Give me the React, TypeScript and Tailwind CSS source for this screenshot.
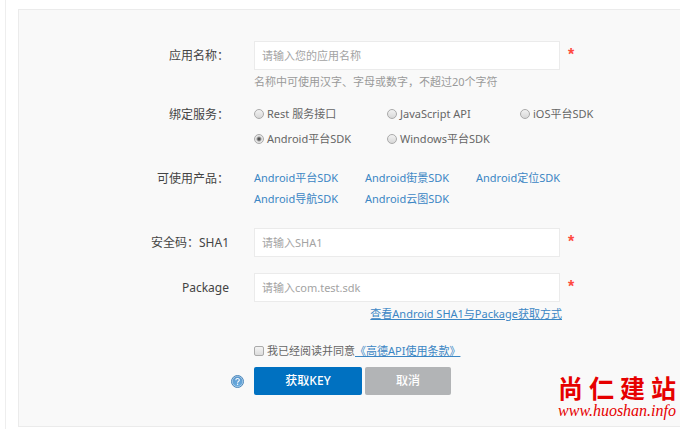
import React, { useState } from 'react';
import { clsx } from 'clsx';

const services = [
  { id: 'rest', name: 'Rest 服务接口' },
  { id: 'js', name: 'JavaScript API' },
  { id: 'ios', name: 'iOS平台SDK' },
  { id: 'android', name: 'Android平台SDK' },
  { id: 'windows', name: 'Windows平台SDK' },
];

const products = [
  'Android平台SDK',
  'Android街景SDK',
  'Android定位SDK',
  'Android导航SDK',
  'Android云图SDK',
];

const labelClass = 'w-[210px] shrink-0 text-right text-xs leading-[22px] text-[#444]';

interface FieldProps {
  id: string;
  label: string;
  placeholder: string;
  children?: React.ReactNode;
}

function Field({ id, label, placeholder, children }: FieldProps) {
  return (
    <div className="flex gap-[25px]">
      <label htmlFor={id} className={clsx(labelClass, 'pt-1')}>
        {label}
      </label>
      <div className="max-w-[308px] flex-1">
        <div className="flex items-start gap-2">
          <input
            id={id}
            type="text"
            placeholder={placeholder}
            className="h-[29px] w-[306px] shrink-0 border border-[#ebebeb] bg-white px-[7px] text-[11px] text-[#555] outline-none placeholder:text-[#a3a3a3] focus:border-[#8bbce0]"
          />
          <span className="pt-1 font-['Liberation_Sans',sans-serif] text-base leading-5 font-bold text-[#ff4a40]">*</span>
        </div>
        {children}
      </div>
    </div>
  );
}

function HelpIcon() {
  return (
    <svg width="13" height="13" viewBox="0 0 13 13" aria-hidden="true">
      <defs>
        <linearGradient id="help-fill" x1="0" y1="0" x2="0" y2="1">
          <stop offset="0" stopColor="#5b97cc" />
          <stop offset="1" stopColor="#69ace0" />
        </linearGradient>
      </defs>
      <circle cx="6.5" cy="6.5" r="6" fill="#b9d5ec" stroke="#4a86ba" strokeWidth="1" />
      <circle cx="6.5" cy="6.5" r="4.9" fill="url(#help-fill)" />
      <path
        d="M4.8 5.2C4.8 3 8.3 3 8.3 5.1C8.3 6.4 6.6 6.3 6.6 7.7"
        fill="none"
        stroke="#fff"
        strokeWidth="1.1"
      />
      <circle cx="6.6" cy="9.3" r="0.7" fill="#fff" />
    </svg>
  );
}

export default function App() {
  const [service, setService] = useState('android');
  const [agreed, setAgreed] = useState(false);

  return (
    <div className="relative min-h-screen overflow-hidden bg-white pl-[5px] font-['Noto_Sans','Noto_Sans_CJK_SC',sans-serif] text-[11px] text-[#666]">
      <div className="min-h-screen border-l border-[#eee] pt-[9px] pl-3">
        <form
          onSubmit={(e) => e.preventDefault()}
          className="border-y border-l border-[#ebebeb] bg-[#f9f9f9] pt-[31px] pb-[31px]"
        >
          <Field id="app-name" label="应用名称：" placeholder="请输入您的应用名称">
            <p className="pt-1 leading-4 whitespace-nowrap text-[#999]">
              名称中可使用汉字、字母或数字，不超过20个字符
            </p>
          </Field>

          {/* Service type */}
          <div className="flex gap-[25px] pt-[14px]" role="radiogroup" aria-labelledby="service-label">
            <div id="service-label" className={labelClass}>
              绑定服务：
            </div>
            <div className="grid grid-cols-[repeat(3,133px)] gap-y-[5px]">
              {services.map((s) => (
                <label key={s.id} className="flex items-center gap-[3px] leading-5 whitespace-nowrap">
                  <input
                    type="radio"
                    name="service"
                    checked={service === s.id}
                    onChange={() => setService(s.id)}
                    className="size-[10px] shrink-0 appearance-none rounded-full border border-[#aaa] bg-linear-to-b from-[#f2f2f2] to-[#d8d8d8] checked:bg-[radial-gradient(circle,#555_0_1px,#e6e6e6_3px)]"
                  />
                  {s.name}
                </label>
              ))}
            </div>
          </div>

          {/* Products */}
          <div className="flex gap-[25px] pt-[19px]">
            <div className={labelClass}>可使用产品：</div>
            <div className="grid grid-cols-[repeat(3,111px)] gap-y-px">
              {products.map((p) => (
                <a key={p} href="#" className="leading-5 whitespace-nowrap text-[#3b86c4]">
                  {p}
                </a>
              ))}
            </div>
          </div>

          <div className="flex flex-col gap-4 pt-[19px]">
            <Field id="sha1" label="安全码：SHA1" placeholder="请输入SHA1" />
            <Field id="package" label="Package" placeholder="请输入com.test.sdk">
              <a
                href="#"
                className="block pt-1 text-right leading-4 whitespace-nowrap text-[#3b86c4] underline"
              >
                查看Android SHA1与Package获取方式
              </a>
            </Field>
          </div>

          <div className="flex items-center pt-[19px] pl-[235px] leading-5">
            <label className="flex items-center gap-[3px]">
              <input
                type="checkbox"
                checked={agreed}
                onChange={(e) => setAgreed(e.target.checked)}
                className="size-[10px] shrink-0 appearance-none rounded-[2px] border border-[#aaa] bg-linear-to-b from-[#f4f4f4] to-[#dcdcdc] checked:bg-[#0071c1] checked:bg-none"
              />
              我已经阅读并同意
            </label>
            <a href="#" className="text-[#3b86c4] underline">
              《高德API使用条款》
            </a>
          </div>

          <div className="flex items-center pt-[6px] pl-[212px] text-white">
            <button type="button" aria-label="帮助" className="mr-[10px]">
              <HelpIcon />
            </button>
            <button type="submit" className="mr-[3px] h-7 w-[108px] rounded-[2px] bg-[#0071c1] text-xs font-medium">
              获取KEY
            </button>
            <button type="button" className="h-7 w-[86px] rounded-[2px] bg-[#b2b4b6] text-xs font-medium">
              取消
            </button>
          </div>
        </form>
      </div>

      {/* Site mark over the corner of the form */}
      <div className="pointer-events-none absolute right-[4px] bottom-[10px] w-[118px] text-[#e60000]">
        <div className="flex justify-between font-['Noto_Sans_CJK_SC',sans-serif] text-[25px] leading-8 font-bold">
          {['尚', '仁', '建', '站'].map((c) => (
            <span key={c}>{c}</span>
          ))}
        </div>
        <div className="flex justify-end font-['Liberation_Serif',serif] text-base leading-4 italic">
          www.huoshan.info
        </div>
      </div>
    </div>
  );
}
